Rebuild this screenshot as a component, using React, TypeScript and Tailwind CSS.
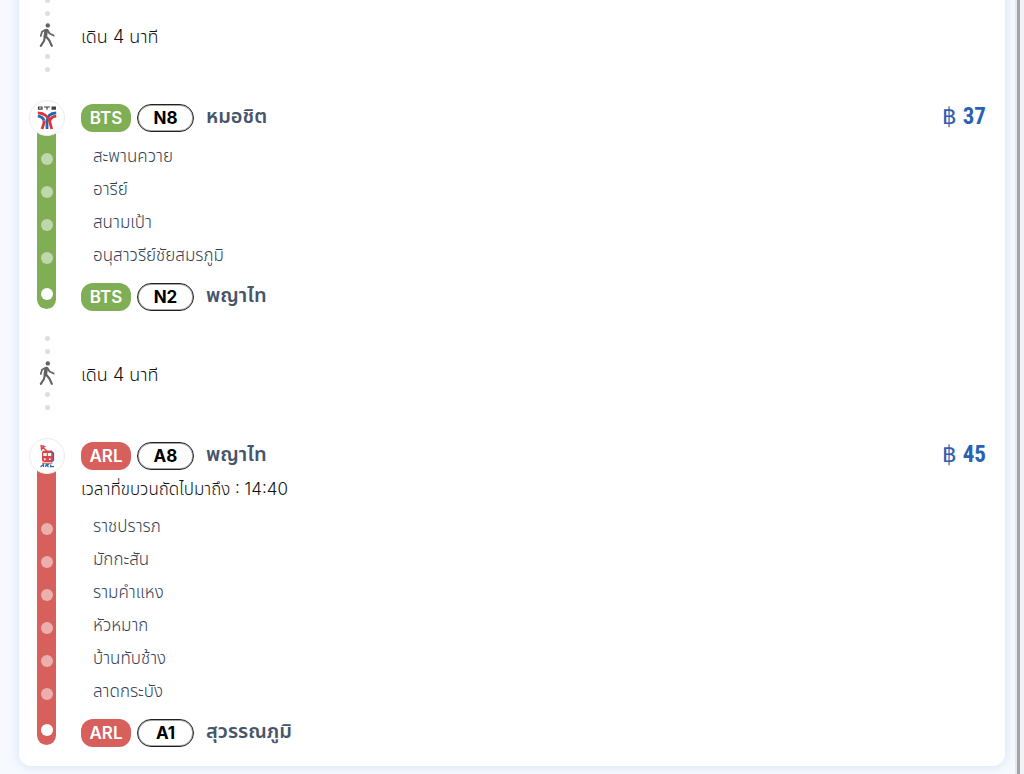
import clsx from "clsx";

type Line = "BTS" | "ARL";

type Station = {
  code: string;
  name: string;
};

type TransitProps = {
  line: Line;
  from: Station;
  to: Station;
  price: number;
  stops: string[];
  nextTrain?: string;
};

const lineColor: Record<Line, string> = {
  BTS: "bg-[#7fae54]",
  ARL: "bg-[#d75f5c]",
};

const WalkIcon = () => (
  <svg
    viewBox="0 0 16 24"
    className="w-4 h-6"
    fill="none"
    stroke="#626262"
    strokeLinecap="round"
    strokeLinejoin="round"
    aria-hidden="true"
  >
    <circle cx="8.800" cy="2.400" r="2.200" fill="#626262" stroke="none" />
    <path d="M7.200 7.500L6.300 13.500" strokeWidth="3.600" />
    <path d="M6.500 6.800L3 8.800L1.800 13" strokeWidth="1.700" />
    <path d="M8.500 7L10.500 10.500L14.700 12.500" strokeWidth="1.800" />
    <path d="M5.800 14L5 18L1.800 22.800" strokeWidth="2.100" />
    <path d="M7 13.500L10.200 17.300L12.800 22.800" strokeWidth="2.100" />
  </svg>
);

const BtsLogo = () => (
  <svg viewBox="0 0 20 24" className="w-5 h-6" fill="none" aria-label="BTS">
    <path
      d="M1 1h4.500M1 3.200h4.500M1.500 1v2.200M5 1v2.200M7 1h6M10 1v2.800M14.500 1H19M14.500 3.200H19M14.500 2.100H19"
      stroke="#3d4046"
      strokeWidth="1.200"
    />
    <g strokeWidth="2.800">
      <path d="M.8 10.200c3 .2 5.200 1.600 6.200 4.300" stroke="#2366b5" />
      <path d="M19.200 10.200c-3 .2-5.200 1.600-6.200 4.300" stroke="#d9363a" />
      <path d="M19.200 6.800c-5.500.4-9 3.200-9.200 8.200V23" stroke="#2366b5" />
      <path d="M.8 6.800c7 .4 10.700 4 12 9.200l1.900 7" stroke="#d9363a" />
      <path d="M7.200 14.500c0 3-1 5.500-2.200 8.500" stroke="#d9363a" />
    </g>
  </svg>
);

const ArlLogo = () => (
  <svg viewBox="0 0 20 24" className="w-5 h-6" fill="none" aria-label="ARL">
    <path
      d="M3.500 1.500l4 1-1.500 1 4 3.500M4 2l.5 3.500 1.500-2"
      stroke="#d9474c"
      strokeWidth="1.300"
    />
    <rect x="5" y="6.500" width="11" height="11.500" rx="2.500" fill="#d9474c" />
    <path d="M14 7l2.500 2v7.500L14 18" stroke="#2f6cb3" strokeWidth="1.300" />
    <rect x="6.300" y="9" width="3.400" height="3" fill="#f4f6fa" />
    <rect x="10.800" y="9" width="3.400" height="3" fill="#f4f6fa" />
    <circle cx="7.800" cy="15.200" r="1" fill="#fff" />
    <circle cx="12.800" cy="15.200" r="1" fill="#fff" />
    <path d="M5 19.200h10.500" stroke="#d9474c" strokeWidth="1" />
    <path
      d="M3.500 23l3-2.500V23M8.500 23l.8-2.500h2l-1 1.200 1.200 1.300M14 20.500l-.5 2.200h3.500"
      stroke="#2f6cb3"
      strokeWidth="1.300"
    />
  </svg>
);

const Dot = () => <span className="w-[5px] h-[5px] rounded-full bg-[#dedede]" />;

const Walk = ({ minutes }: { minutes: number }) => (
  <div className="flex items-center gap-4 pt-[27px] pb-7">
    <div className="w-9 flex flex-col items-center gap-[7px]">
      <div className="flex flex-col gap-2">
        <Dot />
        <Dot />
      </div>
      <WalkIcon />
      <div className="flex flex-col gap-2">
        <Dot />
        <Dot />
      </div>
    </div>
    <p className="pt-1 text-lg font-light text-[#111]">เดิน {minutes} นาที</p>
  </div>
);

const StationRow = ({ line, station }: { line: Line; station: Station }) => (
  <div className="flex items-center h-7">
    <span
      className={clsx(
        "w-[50px] h-7 pt-0.5 rounded-xl flex items-center justify-center text-white text-[17px] font-semibold",
        lineColor[line],
      )}
    >
      {line}
    </span>
    <span className="w-[57px] h-7 pt-px ml-1.5 rounded-[14px] border border-[#222] ring-1 ring-inset ring-[#222]/40 flex items-center justify-center text-black text-[17px] font-bold">
      {station.code}
    </span>
    <h3 className="ml-3 pb-1 text-xl leading-6 font-semibold text-[#475569]">
      {station.name}
    </h3>
  </div>
);

const Transit = ({ line, from, to, price, stops, nextTrain }: TransitProps) => (
  <section className="flex gap-4">
    <div className="w-9 flex flex-col">
      <div className="z-10 w-9 h-9 rounded-full bg-white border border-[#ececec] flex items-center justify-center">
        {line === "BTS" ? <BtsLogo /> : <ArlLogo />}
      </div>
      <div
        className={clsx(
          "w-[19px] ml-2 -mt-1 flex-1 rounded-b-[10px] flex flex-col items-center justify-end pb-[9px]",
          lineColor[line],
        )}
      >
        {stops.map((stop) => (
          <div key={stop} className="h-[33px] flex items-center">
            <span className="w-3 h-3 rounded-full bg-white/50" />
          </div>
        ))}
        <span className="w-3 h-3 mt-3.5 rounded-full bg-white" />
      </div>
    </div>
    <div className="flex-1 pt-1 -mb-0.5">
      <div className="flex items-center justify-between">
        <StationRow line={line} station={from} />
        <p className="pb-0.5 text-[23px] leading-6 font-bold text-[#2b62b0] font-['Roboto_Condensed',Roboto,sans-serif]">
          <span className="font-medium">฿</span> {price}
        </p>
      </div>
      {nextTrain ? (
        <p className="pb-0.5 text-[17px] leading-[38px] font-light text-[#111]">
          เวลาที่ขบวนถัดไปมาถึง : {nextTrain}
        </p>
      ) : (
        <div className="h-2" />
      )}
      <ul className="pl-3 text-[17px] leading-[33px] font-light text-[#334155]">
        {stops.map((stop) => (
          <li key={stop}>{stop}</li>
        ))}
      </ul>
      <div className="mt-[11px]">
        <StationRow line={line} station={to} />
      </div>
    </div>
  </section>
);

const App = () => {
  return (
    <div className="flex bg-[#f6f9fe] overflow-hidden font-['Inter','Noto_Sans_Thai','Noto_Sans',sans-serif]">
      <main className="flex-1 pl-[19px] pr-2.5 pb-2">
        <div className="-mt-[29px] bg-white rounded-xl shadow-[0_0_8px_2px_#dbe8f8] pl-2.5 pr-[19px] pb-[21px]">
          <Walk minutes={4} />
          <Transit
            line="BTS"
            from={{ code: "N8", name: "หมอชิต" }}
            to={{ code: "N2", name: "พญาไท" }}
            price={37}
            stops={["สะพานควาย", "อารีย์", "สนามเป้า", "อนุสาวรีย์ชัยสมรภูมิ"]}
          />
          <Walk minutes={4} />
          <Transit
            line="ARL"
            from={{ code: "A8", name: "พญาไท" }}
            to={{ code: "A1", name: "สุวรรณภูมิ" }}
            price={45}
            nextTrain="14:40"
            stops={["ราชปรารภ", "มักกะสัน", "รามคำแหง", "หัวหมาก", "บ้านทับช้าง", "ลาดกระบัง"]}
          />
        </div>
      </main>
      <div className="w-[9px] bg-[#a2a4aa] border-l-2 border-r-4 border-l-[#e6e9ef] border-r-[#f1f3f7]" />
    </div>
  );
};

export default App;
